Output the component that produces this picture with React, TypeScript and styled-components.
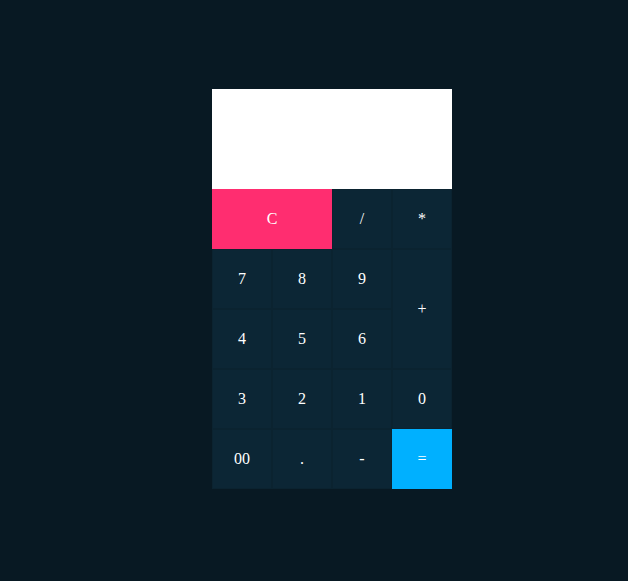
import React from "react";
import styled, { createGlobalStyle } from "styled-components";

const Global = createGlobalStyle`
  html, body { margin: 0; padding: 0; background: #081923; }
  body { font-family: "Liberation Serif", "Times New Roman", serif; min-height: 581px; }
`;

const Page = styled.div`
  padding: 89px 0 0 212px;
`;

const Calc = styled.div`
  width: 240px;
  display: flex;
  flex-direction: column;
`;

const Display = styled.div`
  height: 100px;
  background: #ffffff;
`;

const Keys = styled.div`
  display: grid;
  grid-template-columns: repeat(4, 60px);
  grid-auto-rows: 60px;
`;

type Variant = "normal" | "clear" | "equals";

const Key = styled.button<{ $variant?: Variant; $col?: number; $row?: number }>`
  margin: 0;
  padding: 0;
  font-family: "Liberation Serif", "Times New Roman", serif;
  font-size: 16px;
  color: #ffffff;
  display: flex;
  align-items: center;
  justify-content: center;
  background: ${(p) =>
    p.$variant === "clear" ? "#ff2d70" : p.$variant === "equals" ? "#00b0ff" : "#0c2635"};
  border: 1px solid
    ${(p) => (p.$variant && p.$variant !== "normal" ? "transparent" : "rgba(0,0,0,0.08)")};
  grid-column: span ${(p) => p.$col ?? 1};
  grid-row: span ${(p) => p.$row ?? 1};
`;

export default function App() {
  return (
    <>
      <Global />
      <Page>
        <Calc>
          <Display />
          <Keys>
            <Key $variant="clear" $col={2}>C</Key>
            <Key>/</Key>
            <Key>*</Key>
            <Key>7</Key>
            <Key>8</Key>
            <Key>9</Key>
            <Key $row={2}>+</Key>
            <Key>4</Key>
            <Key>5</Key>
            <Key>6</Key>
            <Key>3</Key>
            <Key>2</Key>
            <Key>1</Key>
            <Key>0</Key>
            <Key>00</Key>
            <Key>.</Key>
            <Key>-</Key>
            <Key $variant="equals">=</Key>
          </Keys>
        </Calc>
      </Page>
    </>
  );
}
